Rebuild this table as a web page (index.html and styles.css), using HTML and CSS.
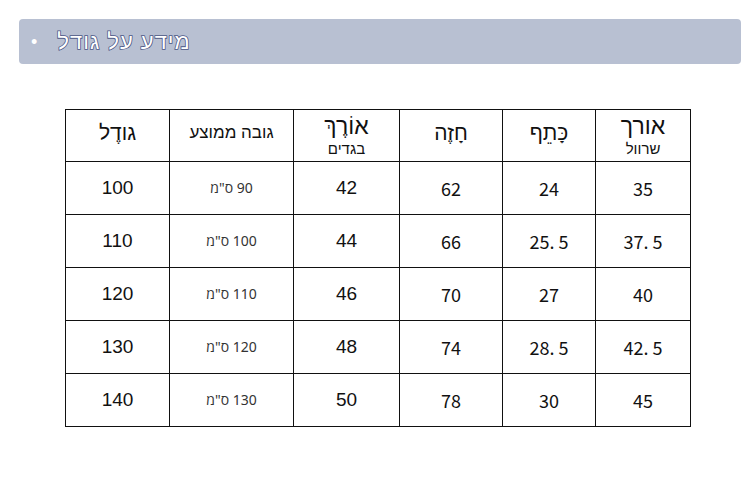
FILE: index.html
```html
<!DOCTYPE html>
<html lang="he">
<head>
<meta charset="utf-8">
<link rel="stylesheet" href="styles.css">
</head>
<body>
<div class="banner">
  <span class="bullet">•</span>
  <span class="banner-title" dir="rtl">מידע על גודל</span>
</div>
<table class="size-table" dir="rtl">
  <colgroup>
    <col class="c-sleeve"><col class="c-shoulder"><col class="c-chest"><col class="c-length"><col class="c-height"><col class="c-size">
  </colgroup>
  <thead>
    <tr>
      <th><span class="h-top">אורך</span><span class="h-bot">שרוול</span></th>
      <th><span class="h-single">כָּתֵף</span></th>
      <th><span class="h-single">חָזֶה</span></th>
      <th><span class="h-top">אוֹרֶךְ</span><span class="h-bot">בגדים</span></th>
      <th><span class="h-single h-small">גובה ממוצע</span></th>
      <th><span class="h-single">גודֶל</span></th>
    </tr>
  </thead>
  <tbody>
    <tr><td class="cjk">35</td><td class="cjk">24</td><td class="cjk">62</td><td class="num">42</td><td class="cm">90 ס"מ</td><td class="num">100</td></tr>
    <tr><td class="cjk">37. 5</td><td class="cjk">25. 5</td><td class="cjk">66</td><td class="num">44</td><td class="cm">100 ס"מ</td><td class="num">110</td></tr>
    <tr><td class="cjk">40</td><td class="cjk">27</td><td class="cjk">70</td><td class="num">46</td><td class="cm">110 ס"מ</td><td class="num">120</td></tr>
    <tr><td class="cjk">42. 5</td><td class="cjk">28. 5</td><td class="cjk">74</td><td class="num">48</td><td class="cm">120 ס"מ</td><td class="num">130</td></tr>
    <tr><td class="cjk">45</td><td class="cjk">30</td><td class="cjk">78</td><td class="num">50</td><td class="cm">130 ס"מ</td><td class="num">140</td></tr>
  </tbody>
</table>
</body>
</html>
```
FILE: styles.css
```css
html, body {
  margin: 0;
  background: #ffffff;
}
body {
  font-family: "Liberation Sans", Arial, sans-serif;
  color: #111;
}
.banner {
  margin: 19px 15px 0 19px;
  height: 45px;
  background: #b8c0d2;
  border-radius: 4px;
  display: flex;
  align-items: center;
  padding-left: 12px;
  gap: 20px;
}
.bullet {
  color: #ffffff;
  font-size: 18px;
  line-height: 1;
}
.banner-title {
  color: #ffffff;
  font-family: "Liberation Sans", Arial, sans-serif;
  font-size: 22px;
  font-weight: normal;
  -webkit-text-stroke: 1.6px #4b5786;
  paint-order: stroke fill;
  letter-spacing: 1px;
}
.size-table {
  margin: 45px 0 0 65px;
  border-collapse: collapse;
  table-layout: fixed;
  width: 626px;
}
.c-sleeve { width: 95px; }
.c-shoulder { width: 93px; }
.c-chest { width: 103px; }
.c-length { width: 106px; }
.c-height { width: 124px; }
.c-size { width: 104px; }
.size-table th,
.size-table td {
  border: 1.3px solid #111;
  text-align: center;
  vertical-align: middle;
  padding: 0;
  height: 52px;
  line-height: 20px;
}
.size-table th {
  font-weight: normal;
  font-family: "Liberation Sans", "DejaVu Sans", sans-serif;
  color: #111;
  height: 51px;
  line-height: 14px;
}
.h-single {
  display: inline-block;
  font-size: 21px;
  line-height: 22px;
  margin-bottom: 6px;
}
.h-small {
  font-size: 17px;
}
.h-top {
  display: block;
  font-size: 23px;
  line-height: 27px;
}
.h-bot {
  display: block;
  font-size: 15px;
  line-height: 18px;
}
.num {
  font-family: "Liberation Sans", Arial, sans-serif;
  font-size: 19px;
}
.cjk {
  font-family: "Noto Sans CJK SC", "Liberation Sans", sans-serif;
  font-size: 18px;
  direction: ltr;
}
.cm {
  font-family: "Noto Sans", "Open Sans", sans-serif;
  font-size: 14px;
  color: #333;
}
```
